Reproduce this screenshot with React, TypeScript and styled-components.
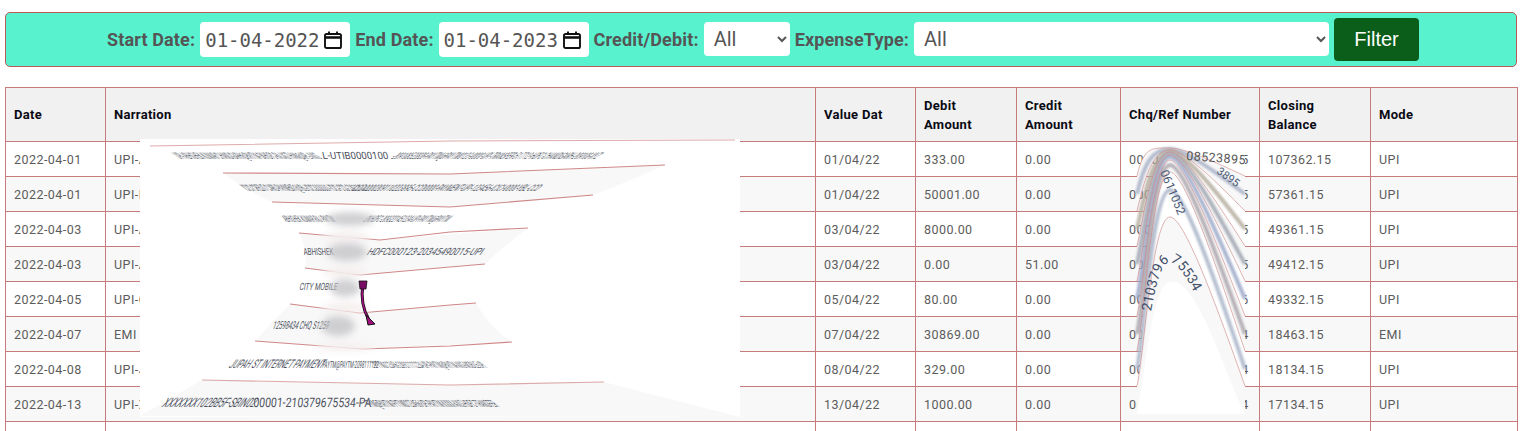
import React from "react";
import styled, { createGlobalStyle } from "styled-components";

const Global = createGlobalStyle`
  html, body { margin: 0; padding: 0; background: #fff; overflow: hidden; height: 431px; }
  #root { height: 431px; }
`;
const Page = styled.div`
  position: relative; height: 431px; overflow: hidden; box-sizing: border-box;
  padding: 12px 13px 0 5px; font-family: Roboto, "Liberation Sans", sans-serif;
`;
const FilterBar = styled.form`
  display: flex; align-items: center; justify-content: center; gap: 5px; height: 55px; box-sizing: border-box;
  background: #58f2cf; border: 1px solid #b85a5a; border-radius: 5px; margin-bottom: 20px; padding-left: 4px;
`;
const Label = styled.label`
  font-size: 18px; font-weight: 700; color: #555; white-space: nowrap; letter-spacing: .15px;
`;
const DateField = styled.div`
  display: flex; align-items: center; justify-content: space-between; width: 150px; height: 35px; box-sizing: border-box;
  padding: 0 8px 0 5px; background: #fff; border-radius: 4px; color: #555;
  font: 19px "DejaVu Sans Mono", monospace; letter-spacing: -.02px;
`;
const Select = styled.select<{ $w: number }>`
  width: ${(p) => p.$w}px; height: 34px; box-sizing: border-box; border: none; border-radius: 4px; background-color: #fff;
  color: #555; font: 20px Roboto, sans-serif; padding: 0 6px; margin-bottom: 1px;
`;
const FilterButton = styled.button`
  width: 85px; height: 43px; background: #0b5e1a; color: #fff; border: none; border-radius: 4px;
  font: 20px "Liberation Sans", sans-serif;
`;
const Table = styled.table`
  width: 1512px; table-layout: fixed; border-collapse: collapse; color: #5c5c5c; font-size: 12.5px;
`;
const HeadRow = styled.tr` height: 54px; background: #f1f1f1; `;
const Row = styled.tr<{ $alt: boolean }>` height: 35px; background: ${(p) => (p.$alt ? "#f8f8f8" : "#fff")}; `;
const Th = styled.th`
  border: 1px solid #c77b7b; padding: 0 8px; text-align: left; color: #0a0a14; font-size: 13px; font-weight: 700;
  line-height: 19px; letter-spacing: .3px; white-space: pre-line;
`;
const Td = styled.td`
  border: 1px solid #c77b7b; padding: 0 8px; white-space: nowrap; overflow: hidden; letter-spacing: .45px;
`;
const Overlay = styled.svg`
  position: absolute; left: 0; top: 0; width: 1530px; height: 431px; pointer-events: none;
`;

const widths = [100, 710, 100, 101, 104, 139, 111, 147];
const heads = ["Date", "Narration", "Value Dat", "Debit\nAmount", "Credit\nAmount", "Chq/Ref Number", "Closing\nBalance", "Mode"];
const rows = [
  ["2022-04-01", "UPI-ABHISHEK CHANDIGARH@APL-UTIB0000100-209108523895-UPI", "01/04/22", "333.00", "0.00", "0000209108523895", "107362.15", "UPI"],
  ["2022-04-01", "UPI-ICICI CREDIT CARD@YBL-ICIC0000001-209110523895-UPI", "01/04/22", "50001.00", "0.00", "0000209110523895", "57361.15", "UPI"],
  ["2022-04-03", "UPI-ABHISHEK KUMAR@PAYTM-PYTM0123456-209322145645-UPI", "03/04/22", "8000.00", "0.00", "0000209322145645", "49361.15", "UPI"],
  ["2022-04-03", "UPI-ABHISHEK KUMAR@OKHDFC-HDFC0000123-209345490015-UPI", "03/04/22", "0.00", "51.00", "0000209345490015", "49412.15", "UPI"],
  ["2022-04-05", "UPI-CITY MOBILE-PAYTM@PAYTM-PYTM0123456-209512345676-UPI", "05/04/22", "80.00", "0.00", "0000209512345676", "49332.15", "UPI"],
  ["2022-04-07", "EMI 12598434 CHQ S125984340071", "07/04/22", "30869.00", "0.00", "0000000012598434", "18463.15", "EMI"],
  ["2022-04-08", "UPI-JUPAH ST INTERNET PAYMENT-PAYTM@PAYTM-209811112234-UPI", "08/04/22", "329.00", "0.00", "0000209811112234", "18134.15", "UPI"],
  ["2022-04-13", "UPI-XXXXXX102BB5F-SBIN0200001-210379675534-PAYTM@PAYTM-UPI", "13/04/22", "1000.00", "0.00", "0000210379675534", "17134.15", "UPI"],
  ["2022-04-14", "UPI-PAYTM@PAYTM-PYTM0123456-210412345678-UPI", "14/04/22", "500.00", "0.00", "0000210412345678", "16634.15", "UPI"],
];

const CalendarIcon = () => (
  <svg width="18" height="18" viewBox="0 0 18 18" fill="none" stroke="#111" strokeWidth="1.9">
    <rect x="1" y="3" width="16" height="14" rx="1.6" />
    <path d="M1 6.5h16" strokeWidth="2.6" />
    <path d="M5 .5v3M13 .5v3" />
  </svg>
);

type Piece = [number, number, number, string, number, number];
const pieces: Piece[] = [
  [181, 159, 142, "UPI-ABHISHEK KUMAR CHANDIGARH@PAYTM-OKHDFC-RAJASTHAN@APL-AXIS", 58, 9],
  [323, 159, 66, "L-UTIB0000100", 12, 10],
  [389, 159, 206, "-209108522828-PAYTM@PAYTM0123-0000-UPI-TRANSFER-517712-HDFC-CHANDIGARH-209108-XYZ", -56, 9],
  [248, 191, 120, "ICICI CREDIT CARD PAYMENT@YBL-ICIC0000001-ICICI-CCD-2091102", 56, 9],
  [350, 191, 186, "CCD0000209110223895-CCD0000-PAYMENT-UPI-123456-ICICI-0000-YBL-CCD", -52, 9],
  [286, 222, 50, "ABHISHEK KUMAR RAJ PAYTM", 40, 9],
  [362, 222, 84, "OKHDFC-2093221451234-UPI-PAYTM@PAYTM", -50, 9],
  [304, 255, 30, "ABHISHEK", 8, 10],
  [366, 255, 115, "HDFC000123-20345490015-UPI", -34, 10],
  [299, 290, 38, "CITY MOBILE", -12, 10],
  [272, 329, 56, "12598434 CHQ S1259", -18, 11],
  [228, 368, 94, "JUPAH ST INTERNET PAYMENT", -34, 12],
  [322, 368, 56, "PAYTM@PAYTM-2098111122", -8, 10],
  [378, 368, 110, "PYTM0123456-209811112234-UPI-PAYTM@PAYTM-AXIS-MOBILE-UPI", 52, 9],
  [161, 407, 92, "XXXXXXX102BB5F-SBIN02", -36, 13],
  [253, 407, 118, "00001-210379675534-PA", -6, 13],
  [371, 407, 129, "YTM@PAYTM-PYTM0123456-UPI-PAYTM-XXXX-AXIS-HDFC-TRANSFER", 52, 10],
];

const Warp = ({ p }: { p: Piece }) => (
  <text transform={`translate(${p[0]} ${p[1]}) skewX(${p[4]})`} fontSize={p[5]} fontFamily="Roboto, sans-serif" fill="#4d525e"
    textLength={p[2]} lengthAdjust="spacingAndGlyphs">{p[3]}</text>
);

const RED = "#cf8888";
const fan = (y: number, ay: number, ax: number) => {
  const c2x = ax + (1245 - ax) * 0.6;
  const c2y = ay + (y - ay) * 0.5;
  return { l: `C1144 ${y - 30} 1152 ${ay} ${ax} ${ay}`, c2x, c2y };
};
const arch = (y: number, ay: number, ax = 1170) => {
  const f = fan(y, ay, ax);
  return `M1137 ${y} ${f.l} C${ax + 14} ${ay} ${f.c2x} ${f.c2y} 1245 ${y}`;
};
const archBack = (y: number, ay: number, ax = 1170) => {
  const f = fan(y, ay, ax);
  return `L1245 ${y} C${f.c2x} ${f.c2y} ${ax + 14} ${ay} ${ax} ${ay} C1152 ${ay} 1144 ${y - 30} 1137 ${y}Z`;
};
const borders: [number, number][] = [[176, 148], [211, 150], [246, 152], [281, 155], [316, 160], [351, 172], [386, 217]];
const strips: [number, number, string][] = [
  [194, 149, "#a7b0c6"], [229, 151, "#b3ab9c"], [264, 153, "#9fa4b0"], [299, 157, "#99a6c6"], [334, 165, "#a9a3aa"], [369, 190, "#a8b4c8"],
];

export default function App() {
  return (
    <Page>
      <Global />
      <FilterBar onSubmit={(e) => e.preventDefault()}>
        <Label>Start Date:</Label>
        <DateField>01-04-2022<CalendarIcon /></DateField>
        <Label>End Date:</Label>
        <DateField>01-04-2023<CalendarIcon /></DateField>
        <Label>Credit/Debit:</Label>
        <Select $w={86} defaultValue="All"><option>All</option></Select>
        <Label>ExpenseType:</Label>
        <Select $w={415} defaultValue="All"><option>All</option></Select>
        <FilterButton>Filter</FilterButton>
      </FilterBar>
      <Table>
        <colgroup>{widths.map((w, i) => <col key={i} style={{ width: w }} />)}</colgroup>
        <thead><HeadRow>{heads.map((h) => <Th key={h}>{h}</Th>)}</HeadRow></thead>
        <tbody>
          {rows.map((r, i) => (
            <Row key={i} $alt={i % 2 === 1}>{r.map((c, j) => <Td key={j}>{c}</Td>)}</Row>
          ))}
        </tbody>
      </Table>
      <Overlay viewBox="0 0 1530 431">
        <defs>
          <filter id="b3" x="-60%" y="-60%" width="220%" height="220%"><feGaussianBlur stdDeviation="3.5" /></filter>
          <filter id="b1" x="-40%" y="-20%" width="180%" height="140%"><feGaussianBlur stdDeviation="0.8" /></filter>
          <path id="arc8" d={arch(404, 262)} />
          <path id="arc2" d={arch(194, 149)} />
          <path id="diag" d="M1160 172 L1190 244" />
        </defs>

        {/* warped narration sheet */}
        <rect x="140" y="139" width="600" height="278" fill="#fff" />
        <path d="M223 173 L450 174 L665 165 Q620 185 593 195 L450 207 L272 202 Q245 190 223 173Z" fill="#f8f8f8" />
        <path d="M299 233 L380 240 L528 228 Q505 245 485 264 L360 275 L305 268 Q308 250 299 233Z" fill="#f8f8f8" />
        <path d="M290 304 L360 313 L476 303 Q490 328 512 342 L363 349 L255 341 Q272 322 290 304Z" fill="#f8f8f8" />
        <path d="M140 416 L202 380 L450 385 L604 382 L740 417 Z" fill="#f8f8f8" />
        <g fill="none" stroke={RED} strokeWidth="1.1">
          <path d="M150 146 L450 141 L735 140" opacity=".7" />
          <path d="M223 173 L450 174 L665 165" />
          <path d="M272 202 L450 207 L593 195" />
          <path d="M299 233 L380 240 L450 232 L528 228" />
          <path d="M305 268 L360 275 L450 267 L485 264" />
          <path d="M290 304 L360 313 L450 305 L476 303" />
          <path d="M255 341 L363 349 L450 346 L512 342" />
          <path d="M202 380 L450 385 L604 382" opacity=".7" />
        </g>
        {pieces.map((p, i) => <Warp key={i} p={p} />)}
        <g filter="url(#b3)" fill="#f6f0f0">
          <ellipse cx="346" cy="237" rx="24" ry="6" /><ellipse cx="345" cy="272" rx="22" ry="6" />
          <ellipse cx="345" cy="308" rx="24" ry="6" /><ellipse cx="345" cy="347" rx="30" ry="5" />
        </g>
        <g filter="url(#b3)" fill="#c4c4c8" opacity=".8">
          <ellipse cx="350" cy="219" rx="24" ry="7" /><ellipse cx="347" cy="252" rx="20" ry="9" />
          <ellipse cx="345" cy="288" rx="15" ry="9" /><ellipse cx="338" cy="326" rx="17" ry="10" />
        </g>

        <path d="M363 284 C361 296 362 308 369 320" fill="none" stroke="#111" strokeWidth="3" />
        <path d="M363 284 C361 296 362 308 369 320" fill="none" stroke="#a0107e" strokeWidth="1.6" />
        <path d="M359 281 L367 281 L366 289 L360 289Z" fill="#7a0c66" stroke="#111" strokeWidth=".8" />
        <path d="M366 315 L375 324 L368 325 Z" fill="#a0107e" stroke="#111" strokeWidth="1" />

        {/* warped cheque column */}
        <path d="M1137 414 C1146 300 1148 146 1168 145 C1195 145 1218 147 1245 147 L1245 414 Z" fill="#fff" />
        <path d={arch(211, 150) + archBack(176, 148)} fill="#f8f8f8" />
        <path d={arch(281, 155) + archBack(246, 152)} fill="#f8f8f8" />
        <path d={arch(351, 172) + archBack(316, 160)} fill="#f8f8f8" />
        <path d={arch(414, 282) + archBack(386, 217)} fill="#f8f8f8" />
        <g fill="none" strokeWidth="4" filter="url(#b1)" opacity=".85">
          {strips.map(([y, ay, c]) => <path key={y} d={arch(y, ay)} stroke={c} />)}
        </g>
        <g fill="none" stroke={RED} strokeWidth=".8" opacity=".8">
          {borders.map(([y, ay]) => <path key={y} d={arch(y, ay)} />)}
        </g>
        <text fontSize="14" fontFamily="Roboto, sans-serif" fill="#44506a"><textPath href="#arc8" startOffset="30%">210379675534</textPath></text>
        <text fontSize="11" fontFamily="Roboto, sans-serif" fill="#4c5a75"><textPath href="#arc2" startOffset="76%">3895</textPath></text>
        <text fontSize="12" fontFamily="Roboto, sans-serif" fill="#4c5a75"><textPath href="#diag">0611052</textPath></text>
        <text x="1186" y="160" fontSize="12.5" letterSpacing=".45" fontFamily="Roboto, sans-serif" fill="#555" transform="rotate(4 1186 160)">08523895</text>
        <path d="M1138 414 C1150 360 1155 284 1174 282 C1195 284 1218 350 1244 414Z" fill="#fff" />
      </Overlay>
    </Page>
  );
}
